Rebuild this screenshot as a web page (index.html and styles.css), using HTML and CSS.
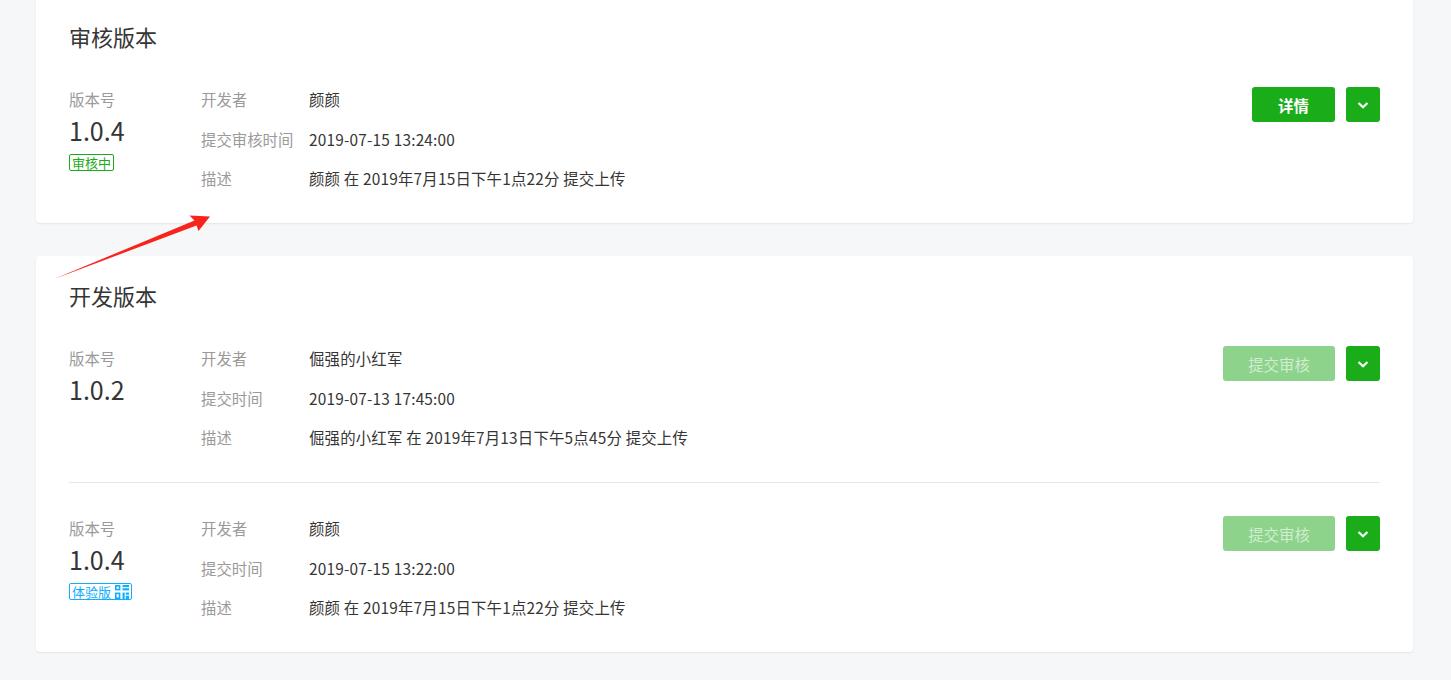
FILE: index.html
```html
<!DOCTYPE html>
<html lang="zh-CN">

<head>
  <meta charset="UTF-8">
  <meta name="viewport" content="width=device-width, initial-scale=1.0">
  <title>版本管理</title>
  <link rel="stylesheet" href="styles.css">
</head>

<body>
  <div class="page">
    <!-- 审核版本 -->
    <div class="card card-first">
      <h2 class="card-title">审核版本</h2>
      <div class="version">
        <div class="version-no">
          <div class="label">版本号</div>
          <div class="num">1.0.4</div>
          <span class="tag tag-green">审核中</span>
        </div>
        <div class="info">
          <div class="row"><span class="label">开发者</span><span class="value">颜颜</span></div>
          <div class="row"><span class="label">提交审核时间</span><span class="value">2019-07-15 13:24:00</span></div>
          <div class="row"><span class="label">描述</span><span class="value">颜颜 在 2019年7月15日下午1点22分 提交上传</span></div>
        </div>
        <div class="ops">
          <a class="btn btn-primary" href="javascript:;">详情</a>
          <a class="btn btn-more" href="javascript:;">
            <svg width="14" height="14" viewBox="0 0 14 14"><path d="M2.5 5 7 9.2 11.5 5" fill="none" stroke="#fff" stroke-width="2.2"/></svg>
          </a>
        </div>
      </div>
    </div>

    <!-- 开发版本 -->
    <div class="card">
      <h2 class="card-title">开发版本</h2>
      <div class="version">
        <div class="version-no">
          <div class="label">版本号</div>
          <div class="num">1.0.2</div>
        </div>
        <div class="info">
          <div class="row"><span class="label">开发者</span><span class="value">倔强的小红军</span></div>
          <div class="row"><span class="label">提交时间</span><span class="value">2019-07-13 17:45:00</span></div>
          <div class="row"><span class="label">描述</span><span class="value">倔强的小红军 在 2019年7月13日下午5点45分 提交上传</span></div>
        </div>
        <div class="ops">
          <a class="btn btn-primary btn-disabled" href="javascript:;">提交审核</a>
          <a class="btn btn-more" href="javascript:;">
            <svg width="14" height="14" viewBox="0 0 14 14"><path d="M2.5 5 7 9.2 11.5 5" fill="none" stroke="#fff" stroke-width="2.2"/></svg>
          </a>
        </div>
      </div>
      <div class="version">
        <div class="version-no">
          <div class="label">版本号</div>
          <div class="num">1.0.4</div>
          <span class="tag tag-blue">体验版
            <svg width="14" height="14" viewBox="0 0 13 13">
              <rect x="0" y="0" width="5" height="5" fill="#10aeff"/>
              <rect x="1.5" y="1.5" width="2" height="2" fill="#fff"/>
              <rect x="7" y="0" width="6" height="2" fill="#10aeff"/>
              <rect x="7" y="3" width="6" height="2" fill="#10aeff"/>
              <rect x="0" y="7" width="5" height="6" fill="#10aeff"/>
              <rect x="1.5" y="8.5" width="2" height="3" fill="#fff"/>
              <rect x="7" y="7" width="2" height="6" fill="#10aeff"/>
              <rect x="10" y="7" width="3" height="2" fill="#10aeff"/>
              <rect x="10" y="10" width="3" height="3" fill="#10aeff"/>
            </svg>
          </span>
        </div>
        <div class="info">
          <div class="row"><span class="label">开发者</span><span class="value">颜颜</span></div>
          <div class="row"><span class="label">提交时间</span><span class="value">2019-07-15 13:22:00</span></div>
          <div class="row"><span class="label">描述</span><span class="value">颜颜 在 2019年7月15日下午1点22分 提交上传</span></div>
        </div>
        <div class="ops">
          <a class="btn btn-primary btn-disabled" href="javascript:;">提交审核</a>
          <a class="btn btn-more" href="javascript:;">
            <svg width="14" height="14" viewBox="0 0 14 14"><path d="M2.5 5 7 9.2 11.5 5" fill="none" stroke="#fff" stroke-width="2.2"/></svg>
          </a>
        </div>
      </div>
    </div>
  </div>

  <!-- 标注箭头 -->
  <svg class="mark-arrow" width="1451" height="680" viewBox="0 0 1451 680">
    <polygon points="54,279 194.5,220.5 189.5,215.5 210,216.5 198.5,231 196.5,225.5" fill="#f8231b"/>
  </svg>
</body>

</html>
```

FILE: styles.css
```css
html,
body {
  margin: 0;
  padding: 0;
  background-color: #f6f7f9;
  font-family: "Noto Sans CJK SC", "Liberation Sans", sans-serif;
  color: #353535;
}

.page {
  padding: 0 38px 0 36px;
}

.card {
  margin-bottom: 33px;
  padding: 24px 33px 0;
  background-color: #fff;
  border-radius: 4px;
  box-shadow: 0 1px 2px rgba(0, 0, 0, 0.08);
}

.card-first {
  margin-top: -3px;
  border-radius: 0 0 4px 4px;
}

.card-title {
  margin: 0 0 3px;
  font-size: 22px;
  font-weight: normal;
  line-height: 30px;
  color: #353535;
}

.version {
  display: flex;
  padding: 34px 0;
  font-size: 15.4px;
  line-height: 22px;
}

.version + .version {
  border-top: 1px solid #e7e7e7;
}

.label {
  color: #9a9a9a;
}

.version-no {
  width: 132px;
}

.version-no .num {
  margin: 3px 0 3px;
  font-size: 25px;
  line-height: 34px;
  color: #353535;
}

.tag {
  display: inline-flex;
  align-items: center;
  gap: 4px;
  padding: 0 2px;
  border: 1px solid;
  border-radius: 2px;
  font-size: 13px;
  line-height: 15px;
}

.tag-green {
  color: #1aad19;
  border-color: #1aad19;
}

.tag-blue {
  color: #10aeff;
  border-color: #10aeff;
}

.info {
  flex: 1;
  display: flex;
  flex-direction: column;
  gap: 17.5px;
}

.info .row {
  display: flex;
}

.info .row .label {
  width: 108px;
}

.value {
  letter-spacing: 0.2px;
}

.ops {
  display: flex;
  align-items: flex-start;
  gap: 11px;
  margin-top: -1px;
}

.btn {
  display: flex;
  align-items: center;
  justify-content: center;
  height: 35px;
  border-radius: 3px;
  text-decoration: none;
  color: #fff;
  background-color: #1aad19;
  font-size: 15.4px;
}

.btn-primary {
  width: 83px;
  font-weight: bold;
}

.btn-disabled {
  width: 112px;
  font-weight: normal;
  color: rgba(255, 255, 255, 0.6);
  background-color: #8dd38c;
}

.btn-more {
  width: 34px;
}

.mark-arrow {
  position: absolute;
  top: 0;
  left: 0;
  pointer-events: none;
}
```
